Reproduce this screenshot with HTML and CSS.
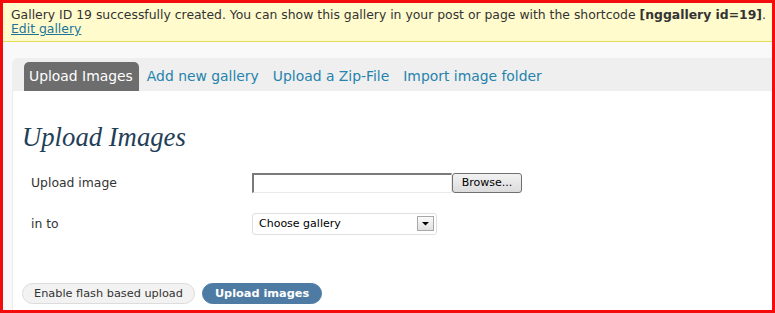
FILE: index.html
```html
<!DOCTYPE html>
<html>
<head>
<meta charset="utf-8">
<link rel="stylesheet" href="styles.css">
</head>
<body>
<div class="frame">
  <div class="notice">
    <p>Gallery ID 19 successfully created. You can show this gallery in your post or page with the shortcode <strong>[nggallery id=19]</strong>.</p>
    <p><a href="#">Edit gallery</a></p>
  </div>
  <div class="wrap">
    <ul class="tabs">
      <li class="tab active">Upload Images</li>
      <li class="tab"><a href="#">Add new gallery</a></li>
      <li class="tab"><a href="#">Upload a Zip-File</a></li>
      <li class="tab"><a href="#">Import image folder</a></li>
    </ul>
    <div class="panel">
      <h2 class="title">Upload Images</h2>
      <div class="rows">
        <div class="row">
          <span class="label">Upload image</span>
          <div class="field">
            <span class="file-input"></span>
            <span class="browse">Browse...</span>
          </div>
        </div>
        <div class="row">
          <span class="label">in to</span>
          <div class="field">
            <span class="select">
              <span class="select-text">Choose gallery</span>
              <span class="select-arrow"><svg width="9" height="5" viewBox="0 0 9 5"><path d="M1 1h7L4.5 4.5z" fill="#000"/></svg></span>
            </span>
          </div>
        </div>
      </div>
      <div class="actions">
        <span class="btn btn-light">Enable flash based upload</span>
        <span class="btn btn-primary">Upload images</span>
      </div>
    </div>
  </div>
</div>
</body>
</html>
```

FILE: styles.css
```css
html, body {
  margin: 0;
  padding: 0;
  background: #fff;
}
.frame {
  width: 775px;
  height: 313px;
  box-sizing: border-box;
  border: 3px solid #f40c0c;
  background: #f9f9f9;
  overflow: hidden;
  font-family: "DejaVu Sans", Verdana, sans-serif;
}
.notice {
  background: #fffbcc;
  border-bottom: 1px solid #e6db55;
  padding: 5px 8px 5px 8px;
  font-size: 12.4px;
  line-height: 14px;
  color: #333;
}
.notice p {
  margin: 0;
  white-space: nowrap;
}
.notice a {
  color: #21759b;
}
.notice strong {
  font-weight: bold;
}
.wrap {
  margin: 16px 0 0 9px;
}
.tabs {
  list-style: none;
  margin: 0;
  padding: 4px 0 0 12px;
  background: #efefef;
  border-top-left-radius: 6px;
  display: flex;
  height: 29px;
  font-size: 13.9px;
}
.tab {
  padding: 0 14px 0 0;
  line-height: 29px;
}
.tab a {
  color: #2583ad;
  text-decoration: none;
}
.tab.active {
  background: #6d6d6d;
  color: #fff;
  border-radius: 5px 5px 0 0;
  padding: 0 6px 0 5px;
  margin-right: 8px;
}
.panel {
  background: #fff;
  border-left: 1px solid #f0e8e8;
  height: 230px;
  padding: 0 0 0 9px;
}
.title {
  margin: 0;
  padding: 31px 0 0 0;
  font-family: "Liberation Serif", Georgia, serif;
  font-style: italic;
  font-weight: normal;
  font-size: 26.7px;
  line-height: 30px;
  color: #1f4057;
}
.rows {
  margin-top: 10px;
}
.row {
  display: flex;
  align-items: center;
  height: 41px;
  font-size: 12.4px;
  color: #333;
}
.label {
  width: 221px;
  padding-left: 9px;
}
.field {
  display: flex;
  align-items: center;
}
.file-input {
  width: 197px;
  height: 17px;
  border: 1px solid #eaeaea;
  border-top: 2px solid #7a7a7a;
  border-left: 2px solid #7a7a7a;
  background: #fff;
}
.browse {
  width: 68px;
  height: 18px;
  border: 1px solid #707070;
  border-radius: 3px;
  background: linear-gradient(#f2f2f2, #dcdcdc);
  font-size: 11px;
  line-height: 18px;
  text-align: center;
  color: #000;
}
.select {
  display: flex;
  align-items: center;
  justify-content: space-between;
  width: 175px;
  height: 20px;
  border: 1px solid #dfdfdf;
  border-radius: 3px;
  font-size: 11px;
  color: #000;
  padding: 0 2px 0 6px;
}
.select-arrow {
  width: 17px;
  height: 15px;
  border: 1px solid #a8a8a8;
  background: linear-gradient(#fafafa, #e0e0e0);
  display: flex;
  align-items: center;
  justify-content: center;
  box-sizing: border-box;
}
.actions {
  display: flex;
  gap: 7px;
  margin-top: 39px;
}
.btn {
  height: 21px;
  line-height: 19px;
  font-size: 11.3px;
  border-radius: 11px;
  padding: 0 11px;
  box-sizing: border-box;
}
.btn-light {
  background: #f2f2f2;
  border: 1px solid #dcdcdc;
  color: #333;
}
.btn-primary {
  background: #4d7ba3;
  border: 1px solid #4d7ba3;
  color: #fff;
  font-weight: bold;
  padding: 0 12px;
}
```
